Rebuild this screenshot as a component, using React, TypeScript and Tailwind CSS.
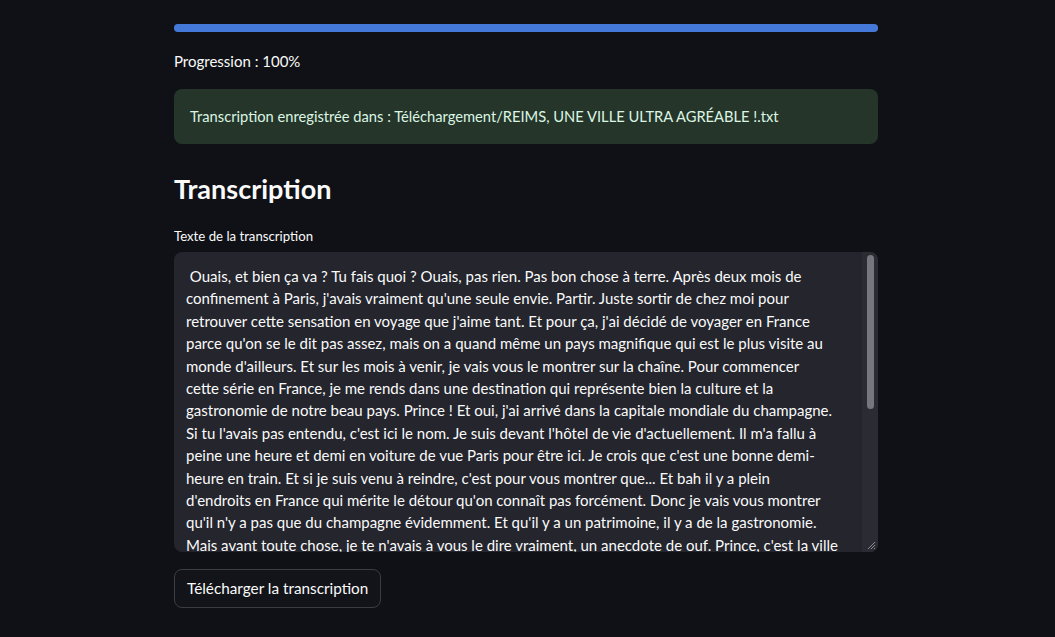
import React from 'react'

const lines = [
  ' Ouais, et bien ça va ? Tu fais quoi ? Ouais, pas rien. Pas bon chose à terre. Après deux mois de',
  "confinement à Paris, j'avais vraiment qu'une seule envie. Partir. Juste sortir de chez moi pour",
  "retrouver cette sensation en voyage que j'aime tant. Et pour ça, j'ai décidé de voyager en France",
  "parce qu'on se le dit pas assez, mais on a quand même un pays magnifique qui est le plus visite au",
  "monde d'ailleurs. Et sur les mois à venir, je vais vous le montrer sur la chaîne. Pour commencer",
  'cette série en France, je me rends dans une destination qui représente bien la culture et la',
  "gastronomie de notre beau pays. Prince ! Et oui, j'ai arrivé dans la capitale mondiale du champagne.",
  "Si tu l'avais pas entendu, c'est ici le nom. Je suis devant l'hôtel de vie d'actuellement. Il m'a fallu à",
  'peine une heure et demi en voiture de vue Paris pour être ici. Je crois que c\'est une bonne demi-',
  "heure en train. Et si je suis venu à reindre, c'est pour vous montrer que... Et bah il y a plein",
  "d'endroits en France qui mérite le détour qu'on connaît pas forcément. Donc je vais vous montrer",
  "qu'il n'y a pas que du champagne évidemment. Et qu'il y a un patrimoine, il y a de la gastronomie.",
  "Mais avant toute chose, je te n'avais à vous le dire vraiment, un anecdote de ouf. Prince, c'est la ville",
  'de la cathédrale, du sacre des rois de France.',
]

export default function App() {
  return (
    <div className="min-h-screen bg-[#0f1116] text-[#fafafa] font-['Lato',sans-serif]">
      <main className="w-[704px] ml-[174px] pt-[24px]">
        {/* progress */}
        <div className="h-[8px] w-full rounded-full bg-[#262730]">
          <div className="h-full w-full rounded-full bg-[#4479d9]" />
        </div>
        <p className="mt-[18px] text-[15px] leading-[22px]">Progression : 100%</p>

        {/* success */}
        <div className="mt-[17px] h-[55px] flex items-center px-[16px] rounded-lg bg-[#25352a] text-[#dcf5e3] text-[14.7px]">
          Transcription enregistrée dans : Téléchargement/REIMS, UNE VILLE ULTRA AGRÉABLE !.txt
        </div>

        <h3 className="mt-[27px] text-[27px] leading-[36px] font-bold">Transcription</h3>

        <label className="block mt-[19px] text-[13.2px] leading-[20px]">Texte de la transcription</label>

        {/* textarea */}
        <div className="relative mt-[6px] h-[300px] rounded-lg bg-[#24252d] overflow-hidden">
          <div className="pl-[12px] pr-[24px] pt-[13px] text-[15px] leading-[22.4px] text-[#fafafa]">
            {lines.map((l, i) => (
              <div key={i} className="whitespace-pre">{l}</div>
            ))}
          </div>
          <div className="absolute right-0 top-0 bottom-0 w-[16px] bg-[#2b2c33]">
            <div className="absolute left-[5px] top-[3px] w-[7px] h-[154px] rounded-full bg-[#75777c]" />
          </div>
          <svg className="absolute right-[2px] bottom-[2px]" width="10" height="10" viewBox="0 0 10 10">
            <path d="M9 2L2 9M9 5L5 9M9 8L8 9" stroke="#8a8c91" strokeWidth="1" />
          </svg>
        </div>

        <button className="mt-[17px] h-[39px] px-[12px] rounded-lg border border-[#3b3d45] bg-[#121419] text-[15.3px] text-[#fafafa]">
          Télécharger la transcription
        </button>
      </main>
    </div>
  )
}
